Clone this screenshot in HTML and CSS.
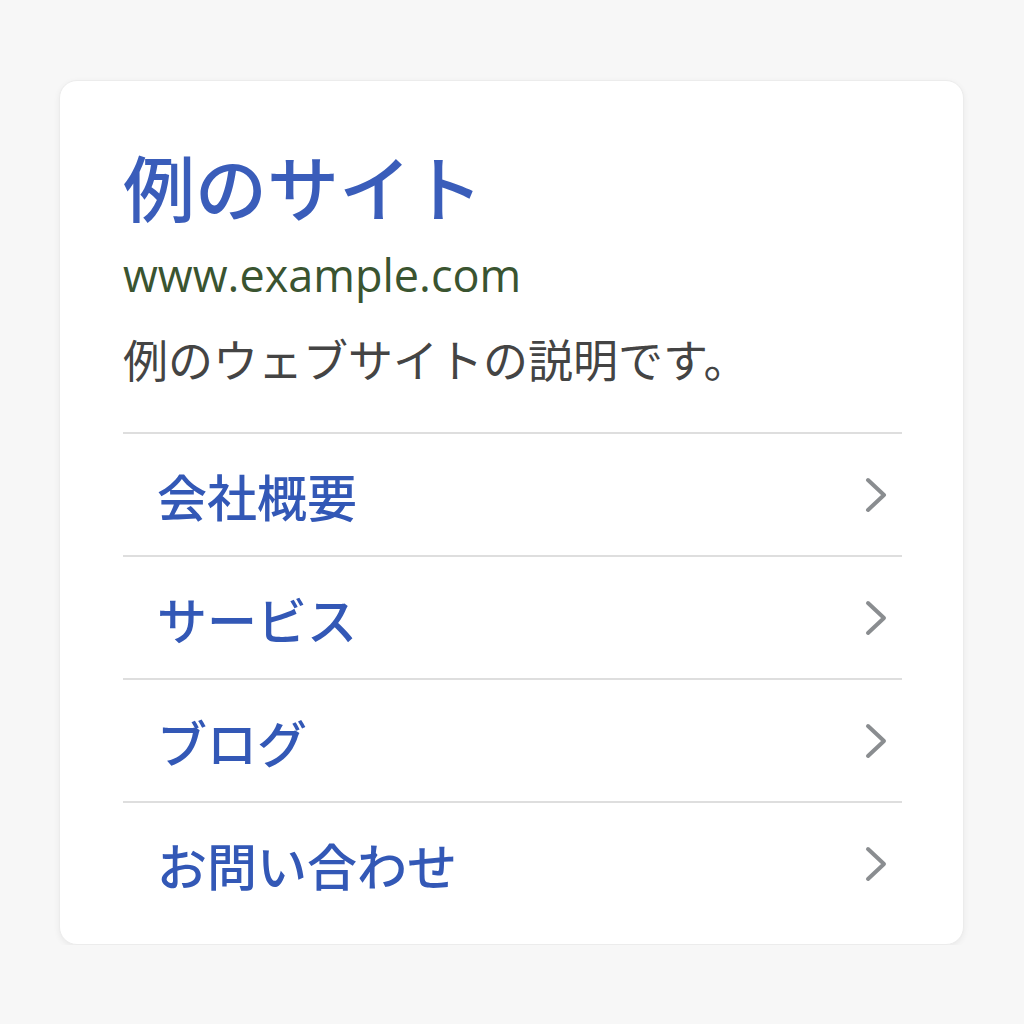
FILE: index.html
```html
<!DOCTYPE html>
<html lang="ja">
<head>
<meta charset="utf-8">
<link rel="stylesheet" href="styles.css">
</head>
<body>
<div class="card">
  <h1 class="title">例のサイト</h1>
  <div class="url">www.example.com</div>
  <p class="desc">例のウェブサイトの説明です。</p>
  <ul class="menu">
    <li class="item"><span class="label">会社概要</span><svg class="chev" width="24" height="36" viewBox="0 0 24 36"><path d="M4 3 L20 18 L4 33" fill="none" stroke="#8a8d90" stroke-width="4" stroke-linecap="round" stroke-linejoin="round"/></svg></li>
    <li class="item"><span class="label">サービス</span><svg class="chev" width="24" height="36" viewBox="0 0 24 36"><path d="M4 3 L20 18 L4 33" fill="none" stroke="#8a8d90" stroke-width="4" stroke-linecap="round" stroke-linejoin="round"/></svg></li>
    <li class="item"><span class="label">ブログ</span><svg class="chev" width="24" height="36" viewBox="0 0 24 36"><path d="M4 3 L20 18 L4 33" fill="none" stroke="#8a8d90" stroke-width="4" stroke-linecap="round" stroke-linejoin="round"/></svg></li>
    <li class="item"><span class="label">お問い合わせ</span><svg class="chev" width="24" height="36" viewBox="0 0 24 36"><path d="M4 3 L20 18 L4 33" fill="none" stroke="#8a8d90" stroke-width="4" stroke-linecap="round" stroke-linejoin="round"/></svg></li>
  </ul>
</div>
</body>
</html>
```
FILE: styles.css
```css
html, body {
  margin: 0;
  padding: 0;
  background: #f7f7f7;
}
body {
  padding: 80px 0 0 59px;
  font-family: "Noto Sans CJK JP", "Noto Sans", sans-serif;
}
.card {
  box-sizing: border-box;
  width: 905px;
  height: 865px;
  background: #ffffff;
  border-radius: 18px;
  border: 1px solid #ececec;
  box-shadow: 0 2px 6px rgba(0,0,0,0.06);
  padding: 59px 61px 0 63px;
}
.title {
  margin: 0;
  font-size: 72px;
  line-height: 90px;
  font-weight: 500;
  color: #3a5dba;
}
.url {
  font-family: "Open Sans", "Liberation Sans", sans-serif;
  font-size: 45px;
  line-height: 56px;
  color: #3a5430;
  margin-top: 17px;
}
.desc {
  margin: 26px 0 0 0;
  font-size: 45px;
  line-height: 60px;
  color: #444444;
}
.menu {
  list-style: none;
  margin: 43px 0 0 0;
  padding: 0;
}
.item {
  display: flex;
  align-items: center;
  justify-content: space-between;
  height: 121px;
  border-top: 2px solid #dedede;
  padding: 0 14px 0 34px;
}
.label {
  font-size: 50px;
  color: #3358b6;
  font-weight: 500;
}
.chev {
  display: block;
}
```
